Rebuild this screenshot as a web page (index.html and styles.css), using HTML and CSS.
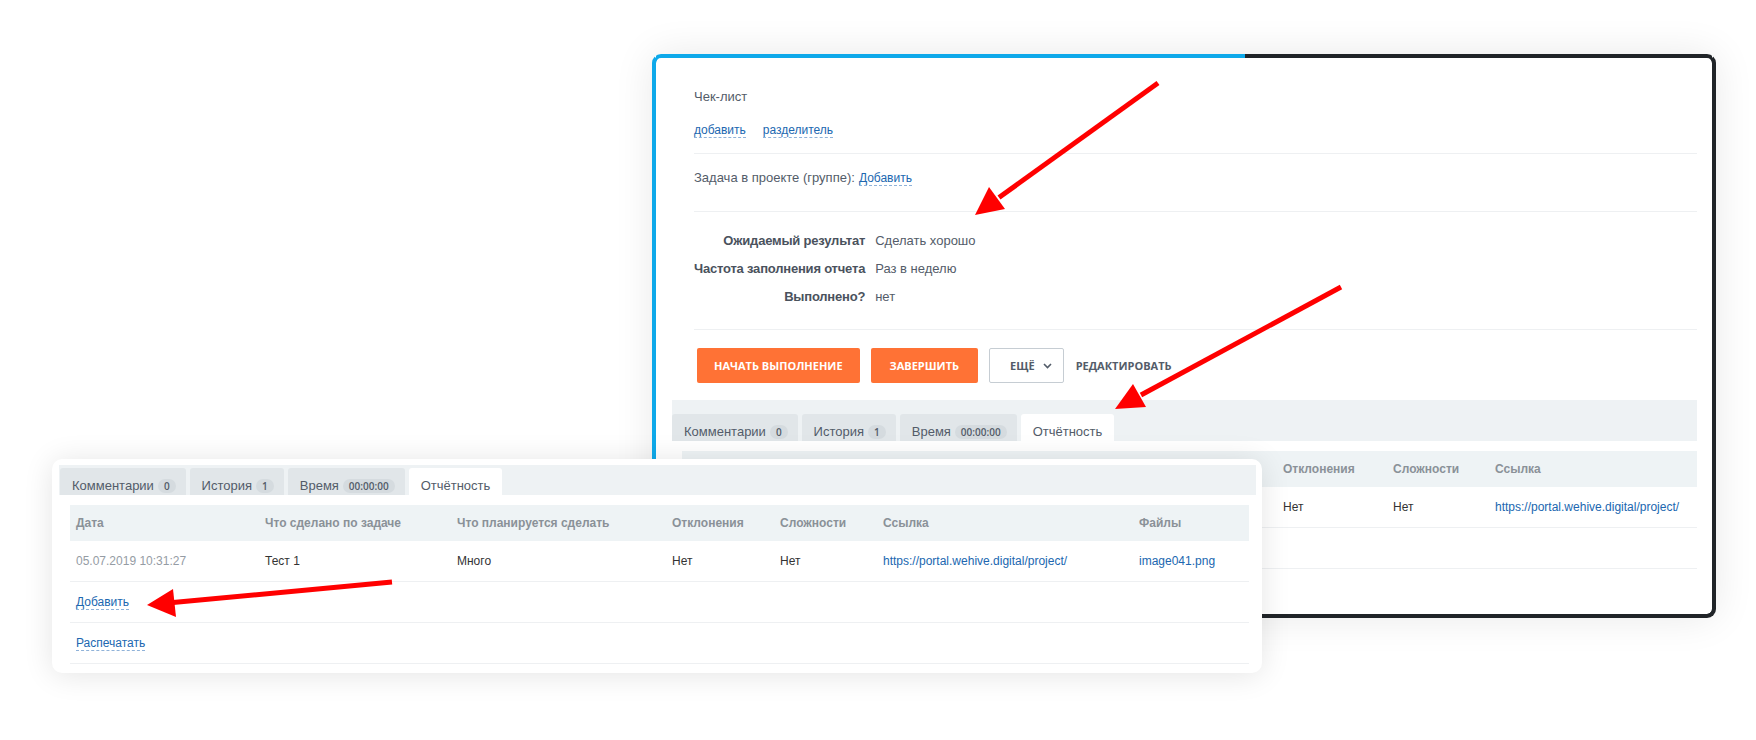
FILE: index.html
```html
<!DOCTYPE html>
<html lang="ru">
<head>
<meta charset="utf-8">
<title>Задача — Отчётность</title>
<link rel="stylesheet" href="styles.css">
</head>
<body>
<div class="canvas">

  <section class="window window-main">
    <div class="task-body">
      <div class="block block-checklist">
        <div class="block-title">Чек-лист</div>
        <div class="link-row">
          <a class="dash-link">добавить</a>
          <a class="dash-link">разделитель</a>
        </div>
      </div>
      <div class="block block-project">
        <span>Задача в проекте (группе):</span>
        <a class="dash-link">Добавить</a>
      </div>
      <div class="block block-props">
        <dl class="props">
          <dt>Ожидаемый результат</dt><dd>Сделать хорошо</dd>
          <dt>Частота заполнения отчета</dt><dd>Раз в неделю</dd>
          <dt>Выполнено?</dt><dd>нет</dd>
        </dl>
      </div>
      <div class="actions">
        <button class="btn btn-orange btn-wide">Начать выполнение</button>
        <button class="btn btn-orange">Завершить</button>
        <button class="btn btn-light">Ещё
          <svg class="chev" width="9" height="6" viewBox="0 0 9 6"><path d="M1 1l3.5 3.5L8 1" fill="none" stroke="#535c69" stroke-width="1.6"/></svg>
        </button>
        <button class="btn btn-text">Редактировать</button>
      </div>
    </div>

    <div class="tabs-area tabs-main">
      <div class="tabbar">
        <div class="tab">Комментарии <span class="badge">0</span></div>
        <div class="tab">История <span class="badge">1</span></div>
        <div class="tab">Время <span class="badge">00:00:00</span></div>
        <div class="tab tab-active">Отчётность</div>
      </div>
      <div class="report report-main">
        <div class="row row-head">
          <div class="cell">Дата</div>
          <div class="cell">Что сделано по задаче</div>
          <div class="cell">Что планируется сделать</div>
          <div class="cell">Отклонения</div>
          <div class="cell">Сложности</div>
          <div class="cell">Ссылка</div>
        </div>
        <div class="row row-data">
          <div class="cell cell-date">05.07.2019 10:31:27</div>
          <div class="cell">Тест 1</div>
          <div class="cell">Много</div>
          <div class="cell">Нет</div>
          <div class="cell">Нет</div>
          <div class="cell"><a class="plain-link">https://portal.wehive.digital/project/</a></div>
        </div>
        <div class="row-line"><a class="dash-link">Добавить</a></div>
        <div class="row-line row-last"><a class="dash-link">Распечатать</a></div>
      </div>
    </div>
  </section>

  <section class="window window-report">
    <div class="tabs-area tabs-report">
      <div class="tabbar tabbar-compact">
        <div class="tab">Комментарии <span class="badge">0</span></div>
        <div class="tab">История <span class="badge">1</span></div>
        <div class="tab">Время <span class="badge">00:00:00</span></div>
        <div class="tab tab-active">Отчётность</div>
      </div>
      <div class="report report-full">
        <div class="row row-head">
          <div class="cell">Дата</div>
          <div class="cell">Что сделано по задаче</div>
          <div class="cell">Что планируется сделать</div>
          <div class="cell">Отклонения</div>
          <div class="cell">Сложности</div>
          <div class="cell">Ссылка</div>
          <div class="cell">Файлы</div>
        </div>
        <div class="row row-data">
          <div class="cell cell-date">05.07.2019 10:31:27</div>
          <div class="cell">Тест 1</div>
          <div class="cell">Много</div>
          <div class="cell">Нет</div>
          <div class="cell">Нет</div>
          <div class="cell"><a class="plain-link">https://portal.wehive.digital/project/</a></div>
          <div class="cell"><a class="plain-link">image041.png</a></div>
        </div>
        <div class="row-line"><a class="dash-link">Добавить</a></div>
        <div class="row-line"><a class="dash-link">Распечатать</a></div>
      </div>
    </div>
  </section>

  <svg class="arrows" width="1756" height="740" viewBox="0 0 1756 740">
    <g stroke="#ff0000" stroke-width="5" stroke-linecap="butt">
      <line x1="1158" y1="83" x2="999" y2="197.5"/>
      <line x1="1341" y1="287" x2="1141" y2="395"/>
      <line x1="392" y1="582" x2="173" y2="602.5"/>
    </g>
    <g fill="#ff0000">
      <polygon points="975,215 1005,209 989,187"/>
      <polygon points="1115,409 1146,407 1133,384"/>
      <polygon points="147,605 176,617 173,589"/>
    </g>
  </svg>

</div>
</body>
</html>
```

FILE: styles.css
```css
* { box-sizing: border-box; }

html, body {
  margin: 0;
  padding: 0;
  background: #fff;
}

body {
  font-family: "Liberation Sans", Arial, sans-serif;
  color: #535c69;
}

.canvas {
  position: relative;
  width: 1756px;
  height: 740px;
  overflow: hidden;
  background: #fff;
}

/* Windows placed on the free canvas */
.window {
  position: absolute;
  background: #fff;
}

.window-main {
  left: 652px;
  top: 54px;
  width: 1064px;
  height: 564px;
  border: 4px solid;
  border-color: transparent #202428 #202428 #0ea9ea;
  border-radius: 9px;
  background:
    linear-gradient(#fff, #fff) padding-box,
    linear-gradient(90deg, #0ea9ea 593px, #202428 593px) border-box;
  box-shadow: 0 0 40px rgba(0, 0, 0, 0.09);
  overflow: hidden;
}

.window-report {
  left: 52px;
  top: 459px;
  width: 1210px;
  height: 214px;
  border-radius: 10px;
  box-shadow: 0 2px 30px rgba(0, 0, 0, 0.11);
  padding: 6px 6px 0 7px;
}

/* Upper task body */
.task-body {
  padding: 31px 15px 0 38px;
}

.block {
  border-bottom: 1px solid #eef0f2;
}

.block-checklist {
  padding-bottom: 15px;
}

.block-title {
  font-size: 13px;
  line-height: 16px;
}

.link-row {
  margin-top: 18px;
  display: flex;
  gap: 17px;
  font-size: 12px;
  line-height: 16px;
}

.block-project {
  padding: 16px 0 25px;
  font-size: 13px;
  line-height: 16px;
  display: flex;
  gap: 4px;
  align-items: baseline;
}

.block-project .dash-link {
  font-size: 12px;
}

.dash-link {
  color: #2067b0;
  text-decoration: none;
  border-bottom: 1px dashed #8fb2d9;
  line-height: 14px;
  cursor: pointer;
}

.plain-link {
  color: #2067b0;
  text-decoration: none;
}

.block-props {
  padding: 21px 0 24px;
}

.props {
  margin: 0;
  display: grid;
  grid-template-columns: max-content 1fr;
  column-gap: 10px;
  row-gap: 12px;
  font-size: 13px;
  line-height: 16px;
}

.props dt {
  font-weight: bold;
  text-align: right;
  color: #4a525d;
  letter-spacing: -0.2px;
}

.props dd {
  margin: 0;
}

/* Buttons */
.actions {
  margin: 18px 0 0 3px;
  display: flex;
  align-items: center;
  gap: 11px;
}

.btn {
  height: 35px;
  border: none;
  border-radius: 2px;
  font-family: "Open Sans", "Liberation Sans", Arial, sans-serif;
  font-weight: 700;
  font-size: 11px;
  text-transform: uppercase;
  padding: 0 19px;
  display: flex;
  align-items: center;
}

.btn-orange {
  background: #ff7235;
  color: #fff;
}

.btn-wide {
  padding: 0 17px;
}

.btn-light {
  background: #fff;
  border: 1px solid #c6cdd3;
  color: #535c69;
  padding: 0 11px 0 20px;
  gap: 8px;
}

.btn-text {
  background: transparent;
  color: #535c69;
  padding: 0 0 0 1px;
}

/* Tabs */
.tabs-main {
  margin: 17px 15px 0 16px;
}

.tabbar {
  background: #eef2f4;
  height: 41px;
  padding: 14px 0 0 0;
  display: flex;
  gap: 4px;
}

.tabbar-compact {
  height: 30px;
  padding: 3px 0 0 1px;
}

.tab {
  height: 27px;
  padding: 8px 10px 0 12px;
  display: flex;
  align-items: center;
  gap: 4px;
  background: #e1e6e9;
  border-radius: 3px 3px 0 0;
  font-size: 13px;
  line-height: 15px;
  color: #535c69;
  white-space: nowrap;
}

.tab-active {
  background: #fff;
  padding-right: 12px;
}

.badge {
  height: 14px;
  padding: 0 6px;
  border-radius: 7px;
  background: #d5dbdf;
  font-family: "Open Sans", "Liberation Sans", Arial, sans-serif;
  font-size: 10px;
  font-weight: 600;
  line-height: 14px;
  color: #535c69;
}

/* Report table */
.report {
  padding: 10px 0 0 10px;
}

.report-full {
  padding: 10px 7px 0 11px;
}

.row {
  display: grid;
  font-size: 12px;
}

.report-main .row {
  grid-template-columns: 189px 192px 214px 110px 102px 1fr;
}

.report-full .row {
  grid-template-columns: 189px 192px 215px 108px 103px 256px 1fr;
}

.cell {
  padding-left: 6px;
  white-space: nowrap;
  overflow: hidden;
}

.row-head {
  height: 36px;
  align-items: center;
  background: #eef3f5;
  font-weight: bold;
  color: #8a9198;
}

.row-data {
  height: 41px;
  align-items: center;
  border-bottom: 1px solid #eef0f2;
  color: #333;
}

.cell-date {
  color: #959ca4;
}

.row-line {
  height: 41px;
  display: flex;
  align-items: center;
  padding-left: 6px;
  border-bottom: 1px solid #eef0f2;
  font-size: 12px;
}

.row-last {
  border-bottom: none;
}

/* Annotation arrows overlay */
.arrows {
  position: absolute;
  left: 0;
  top: 0;
  pointer-events: none;
}
```
